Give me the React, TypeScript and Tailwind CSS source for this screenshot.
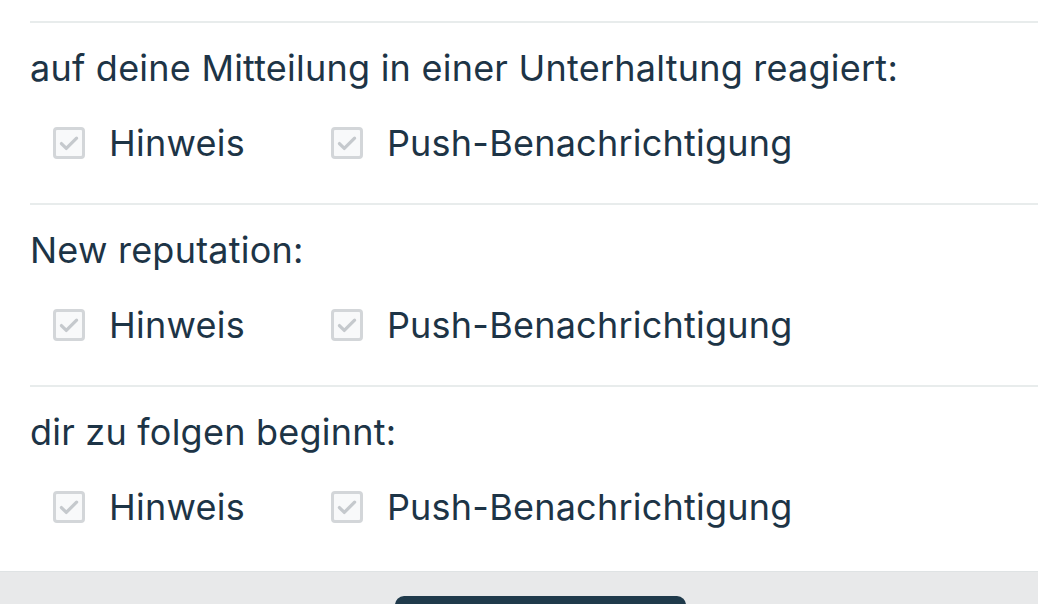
const SECTIONS = [
  "auf deine Mitteilung in einer Unterhaltung reagiert:",
  "New reputation:",
  "dir zu folgen beginnt:",
];

function CheckBox() {
  return (
    <span className="flex h-[32px] w-[32px] shrink-0 items-center justify-center rounded-[4px] border-[3px] border-[#d3d6d9] bg-[#f8f9fa]">
      <svg viewBox="0 0 24 24" className="h-[26px] w-[26px]" fill="none">
        <path
          d="M5 12.5l4.5 4.5 9.5-9.5"
          stroke="#c5c9cd"
          strokeWidth="3"
          strokeLinecap="round"
          strokeLinejoin="round"
        />
      </svg>
    </span>
  );
}

function Option({ label }: { label: string }) {
  return (
    <label className="flex items-center gap-[24px]">
      <CheckBox />
      <span>{label}</span>
    </label>
  );
}

export default function App() {
  return (
    <div
      className="h-[604px] w-[1038px] overflow-hidden bg-white text-[36px] tracking-[0.23px] text-[#1d3446]"
      style={{ fontFamily: "Inter, 'Noto Sans', sans-serif" }}
    >
      <div className="pl-[30px] pt-[21px]">
        {SECTIONS.map((title) => (
          <section key={title} className="h-[182px] border-t-2 border-[#e8ecec]">
            <h3 className="mt-[21px] leading-[48px] font-normal">{title}</h3>
            <div className="mt-[27px] flex items-center gap-[86px] pl-[23px] leading-[48px]">
              <Option label="Hinweis" />
              <Option label="Push-Benachrichtigung" />
            </div>
          </section>
        ))}
      </div>
      <div className="mt-[4px] flex justify-center border-t border-[#dfe3e4] bg-[#e8e9ea] pl-[42px] pt-[24px]">
        <button className="h-[40px] w-[291px] rounded-[9px] bg-[#1f3a4b]" />
      </div>
    </div>
  );
}
